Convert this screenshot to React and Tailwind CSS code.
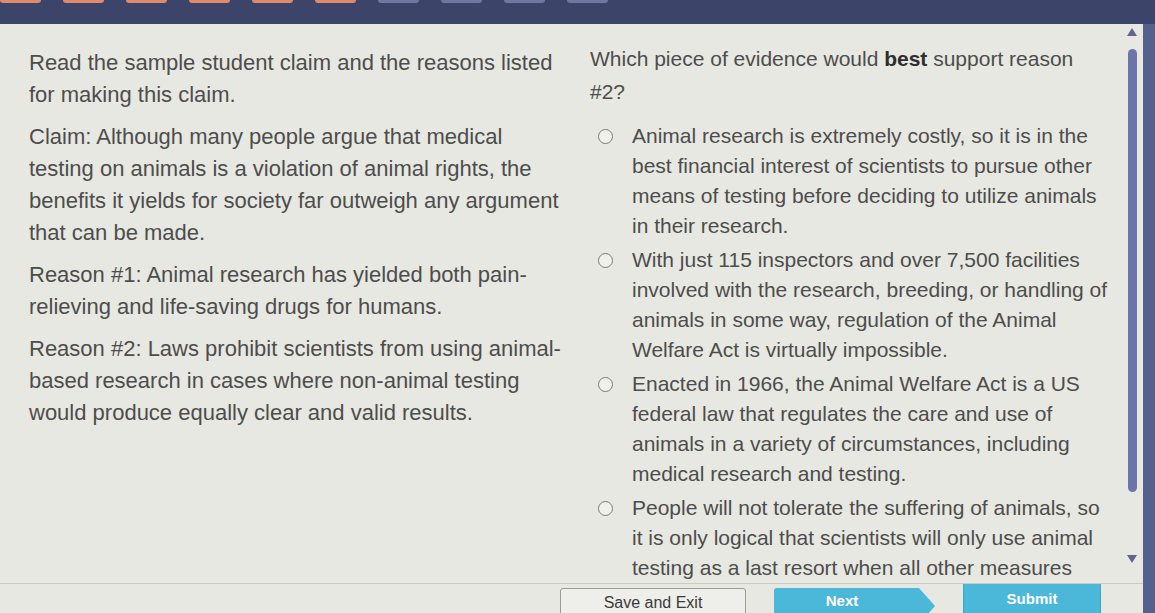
import React from 'react';

const leftParas = [
  ['Read the sample student claim and the reasons listed', 'for making this claim.'],
  [
    'Claim: Although many people argue that medical',
    'testing on animals is a violation of animal rights, the',
    'benefits it yields for society far outweigh any argument',
    'that can be made.',
  ],
  ['Reason #1: Animal research has yielded both pain-', 'relieving and life-saving drugs for humans.'],
  [
    'Reason #2: Laws prohibit scientists from using animal-',
    'based research in cases where non-animal testing',
    'would produce equally clear and valid results.',
  ],
];

const options = [
  [
    'Animal research is extremely costly, so it is in the',
    'best financial interest of scientists to pursue other',
    'means of testing before deciding to utilize animals',
    'in their research.',
  ],
  [
    'With just 115 inspectors and over 7,500 facilities',
    'involved with the research, breeding, or handling of',
    'animals in some way, regulation of the Animal',
    'Welfare Act is virtually impossible.',
  ],
  [
    'Enacted in 1966, the Animal Welfare Act is a US',
    'federal law that regulates the care and use of',
    'animals in a variety of circumstances, including',
    'medical research and testing.',
  ],
  [
    'People will not tolerate the suffering of animals, so',
    'it is only logical that scientists will only use animal',
    'testing as a last resort when all other measures',
    'have been exhausted.',
  ],
];

function Lines({ lines }) {
  return lines.map((l, i) => (
    <span key={i} className="block whitespace-nowrap">
      {l}
    </span>
  ));
}

export default function App() {
  return (
    <div
      className="w-[1155px] h-[613px] overflow-hidden bg-[#3c4469] flex flex-col"
      style={{ fontFamily: '"Liberation Sans", Arial, sans-serif' }}
    >
      {/* progress strip */}
      <div className="h-[24px] shrink-0 flex gap-[22px] items-start">
        {[0, 1, 2, 3, 4, 5].map((i) => (
          <div key={i} className="w-[41px] h-[3px] rounded-b-sm bg-[#e08a6c]" />
        ))}
        {[0, 1, 2, 3].map((i) => (
          <div key={'g' + i} className="w-[41px] h-[3px] rounded-b-sm bg-[#6f78a0]" />
        ))}
      </div>

      <div className="flex-1 flex min-h-0">
        <div className="flex-1 flex flex-col bg-[#e7e8e1] min-w-0">
          <div className="flex-1 flex min-h-0 overflow-hidden">
            {/* left column */}
            <div className="w-[560px] shrink-0 pl-[29px] pt-[23px] flex flex-col gap-[10px] text-[22px] leading-[32px] text-[#4d4d4d]">
              {leftParas.map((p, i) => (
                <p key={i}>
                  <Lines lines={p} />
                </p>
              ))}
            </div>

            {/* right column */}
            <div className="flex-1 pl-[30px] pt-[18px] text-[21px] text-[#4d4d4d]">
              <p className="leading-[33px]">
                <span className="block whitespace-nowrap">
                  Which piece of evidence would <b className="font-bold text-[#2e2e2e]">best</b> support reason
                </span>
                <span className="block">#2?</span>
              </p>
              <div className="mt-[13px] flex flex-col gap-[4px]">
                {options.map((o, i) => (
                  <div key={i} className="flex leading-[30px]">
                    <div className="w-[42px] shrink-0 pl-[8px] pt-[8px]">
                      <div className="w-[15px] h-[15px] rounded-full border-[1.5px] border-[#7a7a7a] bg-[#f1f1ec]" />
                    </div>
                    <div>
                      <Lines lines={o} />
                    </div>
                  </div>
                ))}
              </div>
            </div>

            {/* scrollbar */}
            <div className="w-[22px] shrink-0 flex flex-col items-center pt-[4px] pb-[6px]">
              <svg width="10" height="8" viewBox="0 0 10 8" className="shrink-0">
                <path d="M5 0 L10 8 L0 8 Z" fill="#5f6790" />
              </svg>
              <div className="mt-[13px] w-[9px] h-[443px] rounded-full bg-[#6b75a9]" />
              <div className="flex-1" />
              <svg width="10" height="8" viewBox="0 0 10 8" className="shrink-0 mb-[14px]">
                <path d="M0 0 L10 0 L5 8 Z" fill="#5f6790" />
              </svg>
            </div>
          </div>

          {/* footer */}
          <div className="h-[30px] shrink-0 border-t border-[#c9cac2] flex items-start pt-[4px] pl-[560px] gap-[28px] overflow-hidden">
            <button className="w-[186px] h-[36px] border border-[#9a9a98] rounded-[3px] bg-[#eeeeea] text-[16px] leading-[18px] text-[#3a3a3a] flex items-start justify-center pt-[5px]">
              Save and Exit
            </button>
            <div className="flex h-[36px]">
              <button className="w-[136px] h-[36px] bg-[#4cb8d9] text-white font-bold text-[15px] leading-[18px] flex items-start justify-center pt-[4px] rounded-l-[3px]">
                Next
              </button>
              <svg width="26" height="36" viewBox="0 0 26 36" className="-ml-px">
                <path d="M0 0 L10 0 L26 18 L10 36 L0 36 Z" fill="#4cb8d9" />
              </svg>
            </div>
            <button className="w-[138px] h-[36px] -mt-[6px] bg-[#4cb8d9] border border-[#3ea5c6] rounded-[3px] text-white font-bold text-[15px] leading-[18px] flex items-start justify-center pt-[7px]">
              Submit
            </button>
          </div>
        </div>
        <div className="w-[12px] shrink-0 bg-[#55608d]" />
      </div>
    </div>
  );
}
